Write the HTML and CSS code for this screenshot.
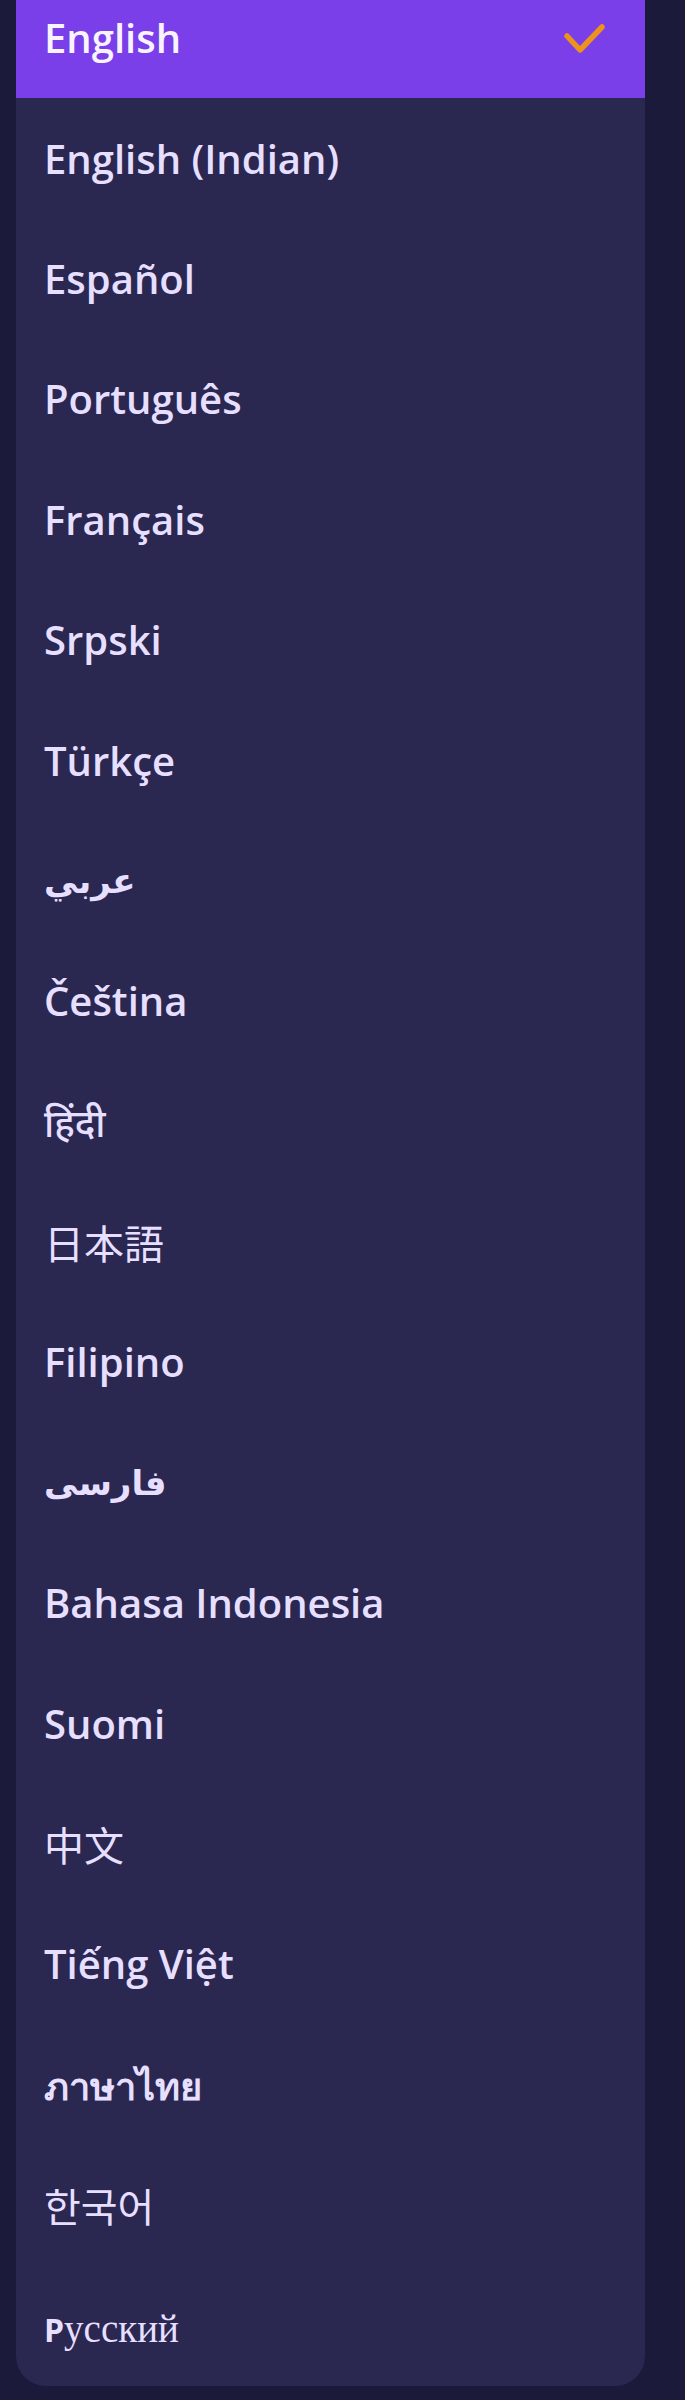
FILE: index.html
```html
<!DOCTYPE html>
<html lang="en">
<head>
<meta charset="utf-8">
<title>Language</title>
<link rel="stylesheet" href="styles.css">
</head>
<body>
<ul class="menu">
  <li class="item selected"><span class="label">English</span>
    <svg class="check" width="43" height="31" viewBox="0 0 43 31"><polyline points="4,13 17,27 39,4" fill="none" stroke="#ec931d" stroke-width="5.5" stroke-linecap="round" stroke-linejoin="round"/></svg>
  </li>
  <li class="item"><span class="label">English (Indian)</span></li>
  <li class="item"><span class="label">Español</span></li>
  <li class="item"><span class="label">Português</span></li>
  <li class="item"><span class="label">Français</span></li>
  <li class="item"><span class="label">Srpski</span></li>
  <li class="item"><span class="label">Türkçe</span></li>
  <li class="item"><span class="label arabic" dir="ltr">عربي</span></li>
  <li class="item"><span class="label">Čeština</span></li>
  <li class="item"><span class="label hindi">हिंदी</span></li>
  <li class="item"><span class="label cjk-jp">日本語</span></li>
  <li class="item"><span class="label">Filipino</span></li>
  <li class="item"><span class="label arabic" dir="ltr">فارسی</span></li>
  <li class="item"><span class="label">Bahasa Indonesia</span></li>
  <li class="item"><span class="label">Suomi</span></li>
  <li class="item"><span class="label cjk-sc">中文</span></li>
  <li class="item"><span class="label">Tiếng Việt</span></li>
  <li class="item"><span class="label thai">ภาษาไทย</span></li>
  <li class="item"><span class="label cjk-kr">한국어</span></li>
  <li class="item"><span class="label russian"><span class="ru-cap">Р</span><span class="ru-rest">усский</span></span></li>
</ul>
</body>
</html>
```

FILE: styles.css
```css
html, body {
  margin: 0;
  padding: 0;
  background: #1b1a3a;
}

body {
  font-family: "Open Sans", Lato, "Noto Sans", "DejaVu Sans", sans-serif;
  color: #e6dfff;
  height: 2400px;
  overflow: hidden;
}

.menu {
  list-style: none;
  margin: -22px 0 0 16px;
  padding: 0;
  width: 629px;
  background: #2a2851;
  border-radius: 0 0 30px 30px;
  overflow: hidden;
}

.item {
  height: 120.4px;
  display: flex;
  align-items: center;
  justify-content: space-between;
  padding: 0 39px 0 28px;
  box-sizing: border-box;
  font-size: 40px;
  font-weight: 600;
}

.item.selected {
  background: #7a3fe9;
  color: #f8f4ff;
}

.label {
  line-height: 1;
  white-space: nowrap;
}

.check {
  display: block;
}

.arabic {
  font-family: "DejaVu Sans", "Noto Sans", sans-serif;
  font-size: 34px;
  font-weight: 700;
}

.hindi {
  font-family: "Noto Sans", "DejaVu Sans", sans-serif;
  font-weight: 500;
  font-size: 38px;
}

.cjk-jp {
  font-family: "Noto Sans CJK JP", sans-serif;
  font-weight: 400;
  font-size: 40px;
}

.cjk-sc {
  font-family: "Noto Sans CJK SC", sans-serif;
  font-weight: 400;
  font-size: 40px;
}

.cjk-kr {
  font-family: "Noto Sans CJK KR", sans-serif;
  font-weight: 400;
  font-size: 40px;
}

.thai {
  font-family: "Noto Sans", "DejaVu Sans", sans-serif;
  font-weight: 700;
  font-size: 38px;
}

.russian {
  display: flex;
  align-items: baseline;
  padding-top: 6px;
}

.ru-cap {
  font-family: "Open Sans", "DejaVu Sans", sans-serif;
  font-weight: 700;
  font-size: 32px;
}

.ru-rest {
  font-family: "Liberation Serif", serif;
  font-weight: 400;
  font-size: 39px;
}
```
